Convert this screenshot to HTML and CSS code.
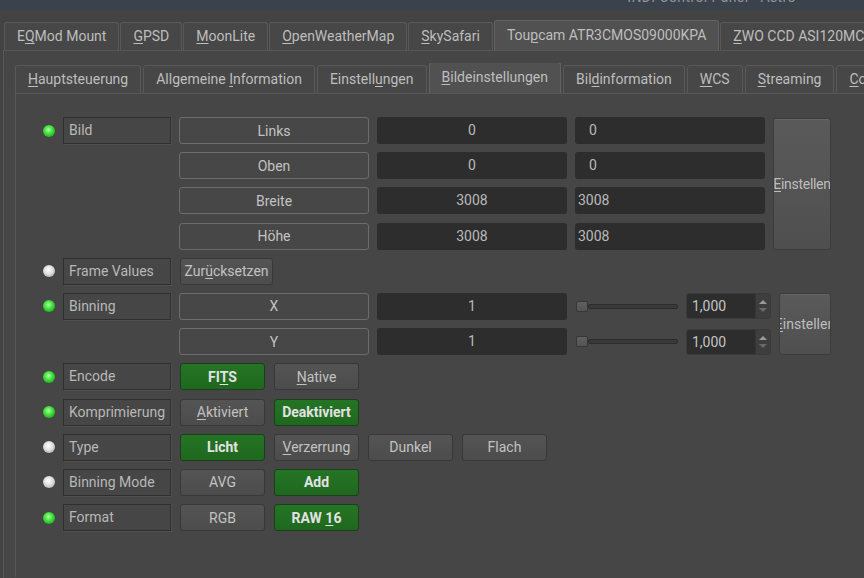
FILE: index.html
```html
<!DOCTYPE html>
<html lang="de">
<head>
    <meta charset="UTF-8">
    <meta name="viewport" content="width=device-width, initial-scale=1.0">
    <title>INDI Control Panel</title>
    <link rel="stylesheet" href="styles.css">
</head>
<body>
    <div class="titlebar"><span class="title">INDI Control Panel - Astro</span></div>

    <div class="tabs outer-tabs">
        <div class="tab">E<u>Q</u>Mod Mount</div>
        <div class="tab"><u>G</u>PSD</div>
        <div class="tab"><u>M</u>oonLite</div>
        <div class="tab"><u>O</u>penWeatherMap</div>
        <div class="tab"><u>S</u>kySafari</div>
        <div class="tab active">Tou<u>p</u>cam ATR3CMOS09000KPA</div>
        <div class="tab"><u>Z</u>WO CCD ASI120MC</div>
    </div>

    <div class="pane outer-pane">
        <div class="tabs inner-tabs">
            <div class="tab"><u>H</u>auptsteuerung</div>
            <div class="tab">Allgemeine <u>I</u>nformation</div>
            <div class="tab">Einstell<u>u</u>ngen</div>
            <div class="tab active"><u>B</u>ildeinstellungen</div>
            <div class="tab">Bil<u>d</u>information</div>
            <div class="tab"><u>W</u>CS</div>
            <div class="tab"><u>S</u>treaming</div>
            <div class="tab"><u>C</u>onnection</div>
        </div>

        <div class="pane inner-pane">
            <div class="props">

                <!-- Bild (frame) -->
                <div class="prop">
                    <div class="led-cell"><span class="led on"></span></div>
                    <div class="label">Bild</div>
                    <div class="body">
                        <div class="stack">
                            <div class="line">
                                <div class="btn framed col">Links</div>
                                <div class="value col">0</div>
                                <div class="value col input pad">0</div>
                            </div>
                            <div class="line">
                                <div class="btn framed col">Oben</div>
                                <div class="value col">0</div>
                                <div class="value col input pad">0</div>
                            </div>
                            <div class="line">
                                <div class="btn framed col">Breite</div>
                                <div class="value col">3008</div>
                                <div class="value col input">3008</div>
                            </div>
                            <div class="line">
                                <div class="btn framed col">Höhe</div>
                                <div class="value col">3008</div>
                                <div class="value col input">3008</div>
                            </div>
                        </div>
                        <div class="btn set set-wide"><span><u>E</u>instellen</span></div>
                    </div>
                </div>

                <!-- Frame Values -->
                <div class="prop">
                    <div class="led-cell"><span class="led idle"></span></div>
                    <div class="label">Frame Values</div>
                    <div class="body">
                        <div class="btn push reset"><span>Zur<u>ü</u>cksetzen</span></div>
                    </div>
                </div>

                <!-- Binning -->
                <div class="prop">
                    <div class="led-cell"><span class="led on"></span></div>
                    <div class="label">Binning</div>
                    <div class="body">
                        <div class="stack">
                            <div class="line">
                                <div class="btn framed col">X</div>
                                <div class="value col">1</div>
                                <div class="slider"><span class="handle"></span><span class="track"></span></div>
                                <div class="spin"><span class="spin-text">1,000</span><span class="arrows"><i class="up"></i><i class="down"></i></span></div>
                            </div>
                            <div class="line">
                                <div class="btn framed col">Y</div>
                                <div class="value col">1</div>
                                <div class="slider"><span class="handle"></span><span class="track"></span></div>
                                <div class="spin"><span class="spin-text">1,000</span><span class="arrows"><i class="up"></i><i class="down"></i></span></div>
                            </div>
                        </div>
                        <div class="btn set set-narrow"><span><u>E</u>instellen</span></div>
                    </div>
                </div>

                <!-- Encode -->
                <div class="prop">
                    <div class="led-cell"><span class="led on"></span></div>
                    <div class="label">Encode</div>
                    <div class="body switches">
                        <div class="btn push sw on"><span>FI<u>T</u>S</span></div>
                        <div class="btn push sw"><span><u>N</u>ative</span></div>
                    </div>
                </div>

                <!-- Komprimierung -->
                <div class="prop">
                    <div class="led-cell"><span class="led on"></span></div>
                    <div class="label">Komprimierung</div>
                    <div class="body switches">
                        <div class="btn push sw"><span><u>A</u>ktiviert</span></div>
                        <div class="btn push sw on">Deaktiviert</div>
                    </div>
                </div>

                <!-- Type -->
                <div class="prop">
                    <div class="led-cell"><span class="led idle"></span></div>
                    <div class="label">Type</div>
                    <div class="body switches">
                        <div class="btn push sw on">Licht</div>
                        <div class="btn push sw"><span><u>V</u>erzerrung</span></div>
                        <div class="btn push sw">Dunkel</div>
                        <div class="btn push sw">Flach</div>
                    </div>
                </div>

                <!-- Binning Mode -->
                <div class="prop">
                    <div class="led-cell"><span class="led idle"></span></div>
                    <div class="label">Binning Mode</div>
                    <div class="body switches">
                        <div class="btn push sw">AVG</div>
                        <div class="btn push sw on">Add</div>
                    </div>
                </div>

                <!-- Format -->
                <div class="prop">
                    <div class="led-cell"><span class="led on"></span></div>
                    <div class="label">Format</div>
                    <div class="body switches">
                        <div class="btn push sw">RGB</div>
                        <div class="btn push sw on"><span>RAW <u>1</u>6</span></div>
                    </div>
                </div>

            </div>
        </div>
    </div>
</body>
</html>
```

FILE: styles.css
```css
/* Dark Qt-style INDI control panel */
html, body {
    margin: 0;
    height: 100%;
    overflow: hidden;
}
body {
    background-color: #434343;
    font-family: Roboto, "Noto Sans", sans-serif;
    font-size: 14px;
    color: #bdbdbd;
}
u {
    text-decoration-thickness: 1px;
    text-underline-offset: 2px;
}

/* window title, mostly scrolled out of view */
.titlebar {
    height: 10px;
    background-color: #3b424b;
    overflow: hidden;
    display: flex;
    justify-content: flex-end;
    padding-right: 68px;
}
.titlebar .title {
    display: block;
    margin-top: -11px;
    line-height: 16px;
    color: #8f959d;
    letter-spacing: 0.4px;
    white-space: nowrap;
}

/* tab bars */
.tabs {
    display: flex;
    align-items: flex-end;
    gap: 1px;
    white-space: nowrap;
    overflow: hidden;
}
.outer-tabs {
    margin-top: 10px;
    padding-left: 4px;
    height: 30px;
}
.tab {
    flex: none;
    height: 27px;
    line-height: 27px;
    padding: 0 12px;
    background-color: #474747;
    border: 1px solid #595959;
    border-bottom: none;
    border-radius: 3px 3px 0 0;
    color: #bebebe;
}
.tab.active {
    height: 29px;
    line-height: 28px;
    background-color: #515151;
    border-color: #636363;
}
.inner-tabs {
    height: 30px;
    gap: 2px;
}
.inner-tabs .tab {
    padding: 0 12px;
}
.inner-tabs .tab.active {
    height: 30px;
}

/* panes */
.pane {
    border: 1px solid #575757;
    background-color: #464646;
}
.outer-pane {
    box-sizing: border-box;
    margin-left: 3px;
    padding: 12px 0 0 11px;
    height: 528px;
    border-right: none;
    border-bottom: none;
}
.inner-pane {
    box-sizing: border-box;
    height: 484px;
    border-right: none;
    border-bottom: none;
    padding: 23px 0 0 26px;
}

/* properties */
.props {
    display: flex;
    flex-direction: column;
    gap: 8.2px;
}
.prop {
    display: flex;
    align-items: flex-start;
    gap: 8px;
}
.led-cell {
    width: 13px;
    height: 27px;
    display: flex;
    align-items: center;
    justify-content: center;
}
.led {
    width: 12px;
    height: 12px;
    border-radius: 50%;
}
.led.on {
    background: radial-gradient(circle at 45% 40%, #b6ffb0 0, #4be845 35%, #22b11f 75%, #1b7d1a 100%);
}
.led.idle {
    background: radial-gradient(circle at 45% 40%, #ffffff 0, #e2e2e2 40%, #b4b4b4 80%, #8c8c8c 100%);
}
.label {
    box-sizing: border-box;
    width: 108px;
    height: 27px;
    line-height: 25px;
    padding-left: 5px;
    border: 1px solid #2f2f2f;
    box-shadow: 1px 1px 0 #505050;
    color: #b8b8b8;
    white-space: nowrap;
    overflow: hidden;
}
.body {
    display: flex;
    gap: 8px;
}
.stack {
    display: flex;
    flex-direction: column;
    gap: 8.2px;
}
.line {
    display: flex;
    gap: 8px;
    align-items: center;
}

/* buttons and fields */
.btn {
    box-sizing: border-box;
    height: 27px;
    display: flex;
    align-items: center;
    justify-content: center;
    border-radius: 3px;
    color: #c2c2c2;
    white-space: nowrap;
    overflow: hidden;
}
.btn.framed {
    background-color: #474747;
    border: 1px solid #6c6c6c;
}
.btn.push {
    background: linear-gradient(#545454, #4c4c4c);
    border: 1px solid #383838;
}
.btn.on {
    background: linear-gradient(#257425, #1f681f);
    border-color: #1a3f1a;
    color: #e2e2e2;
    font-weight: bold;
}
.col {
    width: 190px;
}
.value {
    box-sizing: border-box;
    height: 27px;
    line-height: 27px;
    text-align: center;
    background-color: #2d2d2d;
    border-radius: 3px;
    color: #bababa;
}
.value.input {
    text-align: left;
    padding-left: 3px;
}
.value.input.pad {
    padding-left: 14px;
}
.reset {
    width: 93px;
    margin-left: 1px;
}
.switches {
    gap: 9px;
    padding-left: 1px;
}
.sw {
    width: 85px;
}
.set {
    height: auto;
    align-self: stretch;
    background: linear-gradient(#5a5a5a, #4f4f4f);
    border: 1px solid #3c3c3c;
    box-shadow: inset 0 1px 0 #666;
    color: #bdbdbd;
}
.set span {
    flex: none;
}
.set-wide {
    width: 58px;
    margin-top: 1px;
    letter-spacing: -0.3px;
}
.set-narrow {
    width: 52px;
}

/* slider + spin box */
.slider {
    width: 102px;
    height: 27px;
    display: flex;
    align-items: center;
    padding-left: 1px;
}
.handle {
    flex: none;
    width: 12px;
    height: 11px;
    box-sizing: border-box;
    border-radius: 2px;
    background: linear-gradient(#606060, #545454);
    border: 1px solid #363636;
}
.track {
    flex: 1;
    height: 5px;
    box-sizing: border-box;
    background-color: #3a3a3a;
    border: 1px solid #2c2c2c;
    border-radius: 2px;
}
.spin {
    box-sizing: border-box;
    width: 85px;
    height: 26px;
    display: flex;
    background-color: #2d2d2d;
    border: 1px solid #3a3a3a;
    border-radius: 3px;
}
.spin-text {
    flex: 1;
    line-height: 24px;
    padding-left: 5px;
    color: #c4c4c4;
}
.arrows {
    width: 14px;
    display: flex;
    flex-direction: column;
    justify-content: center;
    align-items: center;
    gap: 4px;
    background-color: #3e3e3e;
    border-left: 1px solid #353535;
}
.arrows i {
    width: 0;
    height: 0;
    border-left: 4px solid transparent;
    border-right: 4px solid transparent;
}
.arrows .up {
    border-bottom: 4px solid #9a9a9a;
}
.arrows .down {
    border-top: 4px solid #6a6a6a;
}
```
